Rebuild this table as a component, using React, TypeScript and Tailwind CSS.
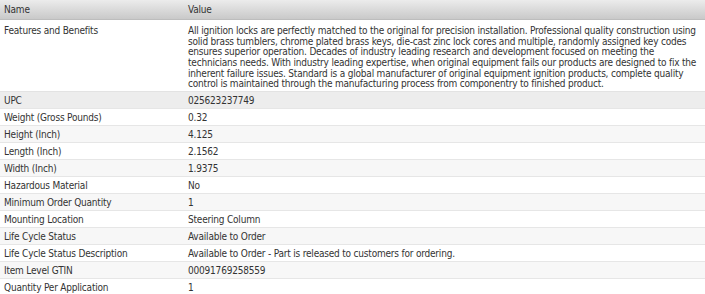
const features = [
  'All ignition locks are perfectly matched to the original for precision installation. Professional quality construction using',
  'solid brass tumblers, chrome plated brass keys, die-cast zinc lock cores and multiple, randomly assigned key codes',
  'ensures superior operation. Decades of industry leading research and development focused on meeting the',
  'technicians needs. With industry leading expertise, when original equipment fails our products are designed to fix the',
  'inherent failure issues. Standard is a global manufacturer of original equipment ignition products, complete quality',
  'control is maintained through the manufacturing process from componentry to finished product.',
];

const rows: [string, string][] = [
  ['UPC', '025623237749'],
  ['Weight (Gross Pounds)', '0.32'],
  ['Height (Inch)', '4.125'],
  ['Length (Inch)', '2.1562'],
  ['Width (Inch)', '1.9375'],
  ['Hazardous Material', 'No'],
  ['Minimum Order Quantity', '1'],
  ['Mounting Location', 'Steering Column'],
  ['Life Cycle Status', 'Available to Order'],
  ['Life Cycle Status Description', 'Available to Order - Part is released to customers for ordering.'],
  ['Item Level GTIN', '00091769258559'],
  ['Quantity Per Application', '1'],
];

export default function App() {
  return (
    <div className="w-[705px] h-[294px] overflow-hidden bg-white text-[10px] leading-[10.67px] tracking-[-0.2px] text-[#333] font-['DejaVu_Sans_Condensed','DejaVu_Sans',sans-serif]">
      <div className="grid grid-cols-[184px_1fr] h-[20px] pt-[2px] items-center bg-gradient-to-b from-[#ececec] to-[#c9c9c9] border-b border-[#bdbdbd]">
        <div className="pl-[4px]">Name</div>
        <div className="pl-[4px]">Value</div>
      </div>
      <div className="grid grid-cols-[184px_1fr] h-[72px] pt-[6px] border-b border-[#e3e3e3]">
        <div className="pl-[4px]">Features and Benefits</div>
        <div className="pl-[4px] whitespace-nowrap">
          {features.map((l) => (
            <div key={l}>{l}</div>
          ))}
        </div>
      </div>
      {rows.map(([name, value], i) => (
        <div
          key={name}
          className={
            'grid grid-cols-[184px_1fr] h-[17px] pt-[2px] items-center border-b border-[#e6e6e6] ' +
            (i === 0 ? 'bg-[#ededed]' : i % 2 === 0 ? 'bg-[#f7f7f7]' : 'bg-white')
          }
        >
          <div className="pl-[4px]">{name}</div>
          <div className="pl-[4px]">{value}</div>
        </div>
      ))}
    </div>
  );
}
